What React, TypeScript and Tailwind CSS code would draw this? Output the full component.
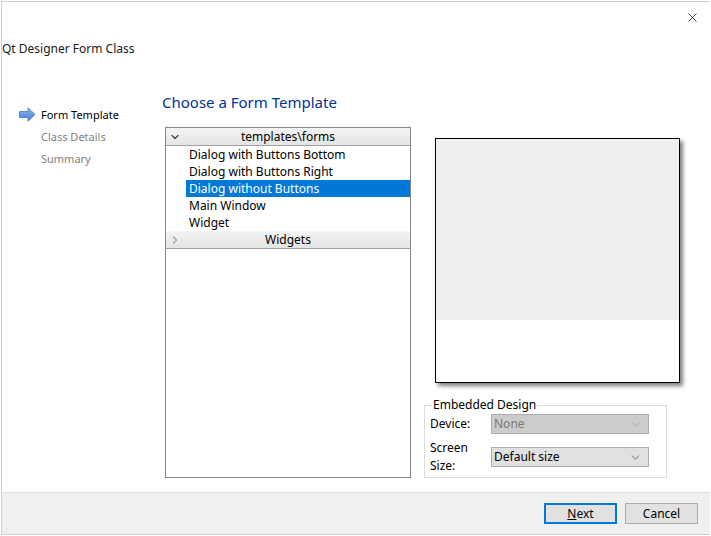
import React from 'react';
import { ChevronDown, ChevronRight, X } from 'lucide-react';

const font = "font-['Noto_Sans','Open_Sans',sans-serif]";

const steps = [
  { label: 'Form Template', active: true },
  { label: 'Class Details', active: false },
  { label: 'Summary', active: false },
];

const forms = [
  'Dialog with Buttons Bottom',
  'Dialog with Buttons Right',
  'Dialog without Buttons',
  'Main Window',
  'Widget',
];

function StepArrow() {
  return (
    <svg width="17" height="15" viewBox="0 0 17 15" className="shrink-0">
      <defs>
        <linearGradient id="arrowFill" x1="0" y1="0" x2="0" y2="1">
          <stop offset="0" stopColor="#8fb8f0" />
          <stop offset="1" stopColor="#3f7fd8" />
        </linearGradient>
      </defs>
      <path d="M0.5 4.5H9V0.8L16 7.5L9 14.2V10.5H0.5Z" fill="url(#arrowFill)" stroke="#4a78b8" strokeWidth="0.8" />
    </svg>
  );
}

function ToolboxHeader({ label, open }: { label: string; open: boolean }) {
  return (
    <div className="flex h-[18px] items-center border-b border-[#a0a0a0] bg-gradient-to-b from-[#f4f4f4] to-[#e4e4e4] last:border-b">
      <div className="flex w-[16px] justify-center pl-[1px]">
        {open ? (
          <ChevronDown size={12} strokeWidth={2.5} className="text-[#404040]" />
        ) : (
          <ChevronRight size={12} strokeWidth={2.5} className="text-[#a0a0a0]" />
        )}
      </div>
      <span className="flex-1 pr-[16px] text-center text-[12px] leading-none text-black">{label}</span>
    </div>
  );
}

function ComboRow({ label, value, disabled }: { label: string; value: string; disabled?: boolean }) {
  return (
    <div className="flex items-center">
      <span className="w-[66px] pl-[5px] text-[12px] text-black">{label}</span>
      <div
        className={`flex h-[20px] w-[158px] items-center justify-between border border-[#adadad] pl-[2px] pr-[6px] text-[12px] ${
          disabled ? 'bg-[#cccccc] text-[#7a7a7a]' : 'bg-[#e1e1e1] text-black'
        }`}
      >
        <span>{value}</span>
        <ChevronDown size={13} strokeWidth={1.25} className={disabled ? 'text-[#a0a0a0]' : 'text-[#333333]'} />
      </div>
    </div>
  );
}

export default function App() {
  return (
    <div className={`${font} h-[536px] w-[711px] overflow-hidden bg-white pl-[1px] pt-[1px]`}>
      <div className="flex h-[534px] w-[709px] flex-col border-l border-t border-b border-[#cfcfcf] bg-white">
        <div className="flex h-[122px] flex-col">
          <div className="flex justify-end pr-[10px] pt-[8px]">
            <X size={15} strokeWidth={1.1} className="text-black" />
          </div>
          <div className="pl-[0px] pt-[16px] text-[12px] leading-[16px] text-[#1a1a1a]">Qt Designer Form Class</div>
        </div>

        <div className="flex flex-1">
          <div className="w-[160px] pl-[17px] pt-[-10px]">
            <div className="-mt-[18px] flex flex-col gap-[6px]">
              {steps.map((step) => (
                <div key={step.label} className="flex h-[16px] items-center gap-[5px]">
                  <div className="w-[17px]">{step.active && <StepArrow />}</div>
                  <span className={`text-[11px] leading-none ${step.active ? 'text-black' : 'text-[#808080]'}`}>
                    {step.label}
                  </span>
                </div>
              ))}
            </div>
          </div>

          <div className="-mt-[32px] flex-1">
            <h1 className="text-[15px] font-normal leading-[20px] text-[#003399]">Choose a Form Template</h1>
            <div className="mt-[15px] flex">
              <div className="ml-[3px] flex h-[351px] w-[246px] flex-col border border-[#828790]">
                <ToolboxHeader label="templates\forms" open />
                <ul className="flex flex-col pl-0">
                  {forms.map((form) => (
                    <li
                      key={form}
                      className={`ml-[20px] h-[17px] pl-[3px] text-[12px] leading-[17px] ${
                        form === 'Dialog without Buttons' ? 'bg-[#0078d7] text-white' : 'text-black'
                      }`}
                    >
                      {form}
                    </li>
                  ))}
                </ul>
                <ToolboxHeader label="Widgets" open={false} />
              </div>

              <div className="ml-[13px] flex flex-col">
                <div className="ml-[11px] mt-[11px] flex h-[245px] w-[245px] flex-col border border-black bg-white shadow-[3px_3px_4px_rgba(0,0,0,0.5)]">
                  <div className="h-[181px] bg-[#efefef]" />
                </div>
                <div className="relative mt-[22px] flex h-[73px] w-[243px] flex-col justify-center gap-[5px] border border-[#dcdcdc] pt-[6px]">
                  <span className="absolute -top-[9px] left-[7px] bg-white px-[1px] text-[12px] leading-[16px] text-black">
                    Embedded Design
                  </span>
                  <ComboRow label="Device:" value="None" disabled />
                  <ComboRow label="Screen Size:" value="Default size" />
                </div>
              </div>
            </div>
          </div>
        </div>

        <div className="flex h-[42px] items-center justify-end gap-[8px] border-t border-[#dfdfdf] bg-[#f0f0f0] pr-[12px]">
          <button className="h-[21px] w-[73px] border-2 border-[#0078d7] bg-[#e1e1e1] text-[12px] leading-none text-black">
            <span className="underline">N</span>ext
          </button>
          <button className="h-[21px] w-[73px] border border-[#adadad] bg-[#e1e1e1] text-[12px] leading-none text-black">
            Cancel
          </button>
        </div>
      </div>
    </div>
  );
}
